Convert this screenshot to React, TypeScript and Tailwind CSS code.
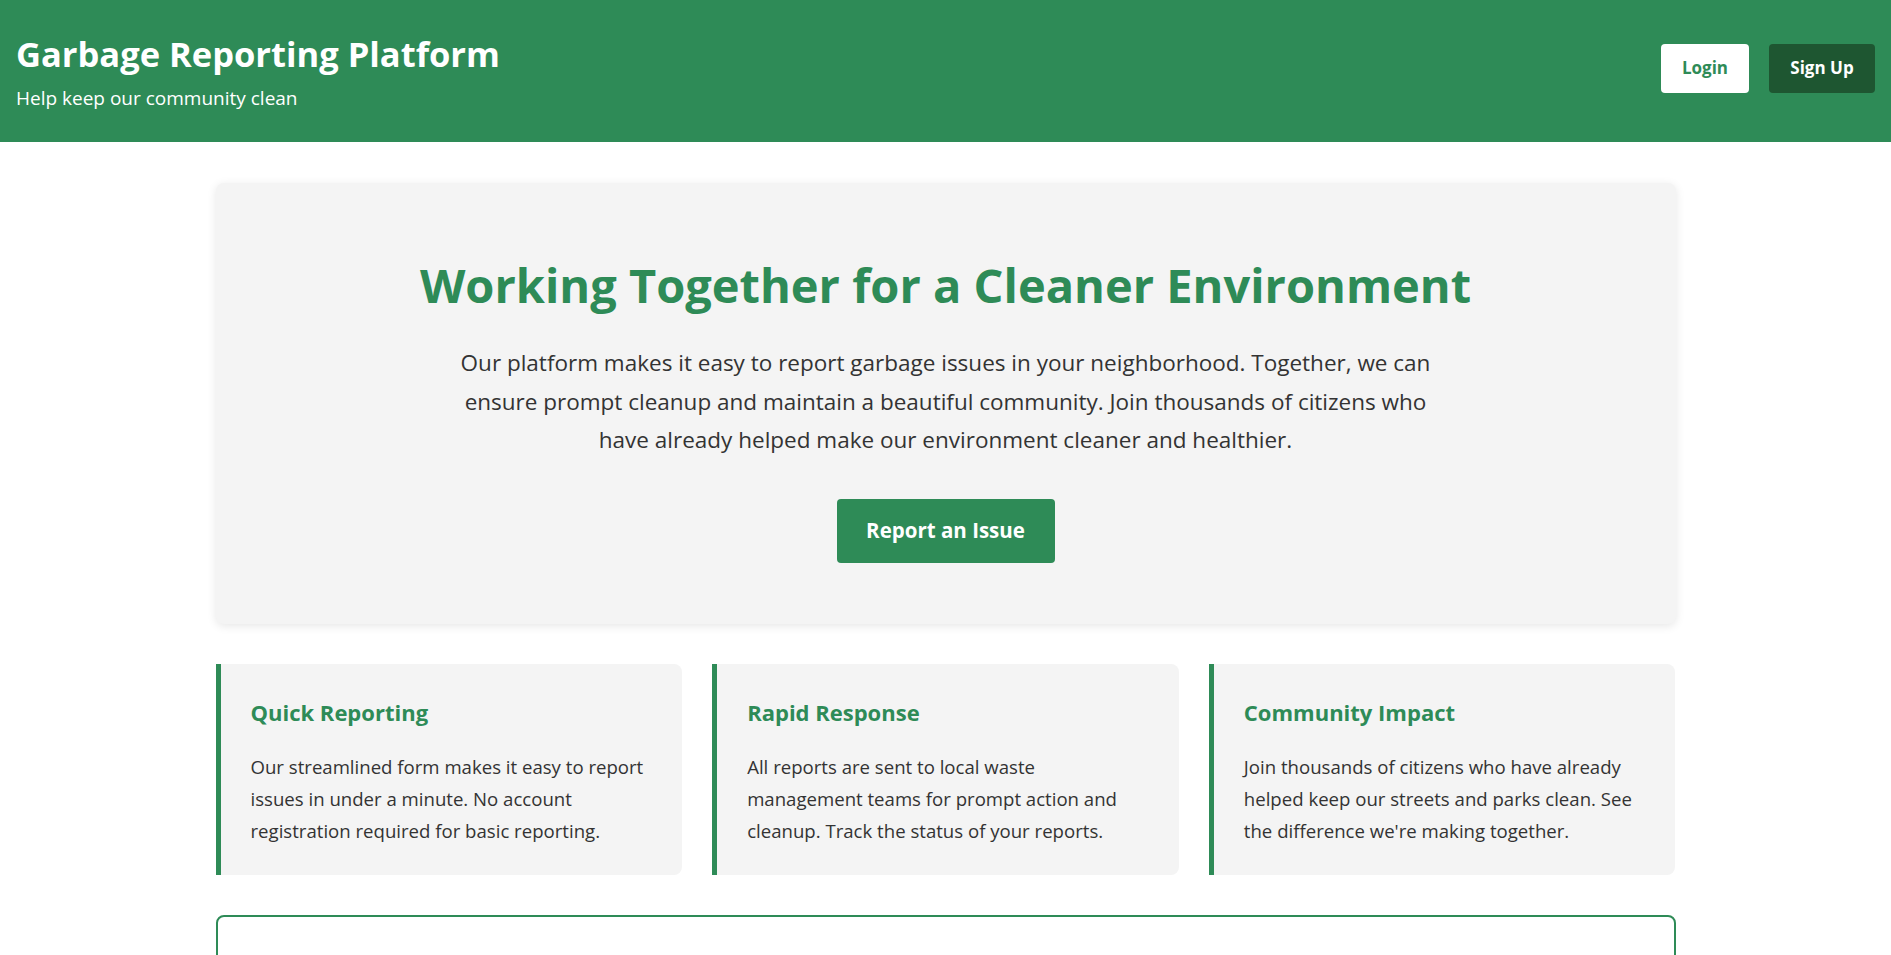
const features = [
  {
    title: "Quick Reporting",
    text: "Our streamlined form makes it easy to report issues in under a minute. No account registration required for basic reporting.",
  },
  {
    title: "Rapid Response",
    text: "All reports are sent to local waste management teams for prompt action and cleanup. Track the status of your reports.",
  },
  {
    title: "Community Impact",
    text: "Join thousands of citizens who have already helped keep our streets and parks clean. See the difference we're making together.",
  },
];

export default function App() {
  return (
    <div className="min-h-screen bg-white text-[#333] font-['Open_Sans',sans-serif]">
      {/* header */}
      <header className="flex h-[142px] items-center justify-between bg-[#2e8b57] px-4">
        <div className="pt-[2px]">
          <h1 className="text-[34.5px] font-bold leading-[43px] text-white">Garbage Reporting Platform</h1>
          <p className="mt-[10px] text-[19px] leading-[27px] text-white">Help keep our community clean</p>
        </div>
        <div className="-mt-[6px] flex gap-5">
          <button className="h-[49px] w-[88px] rounded bg-white text-[17px] font-bold text-[#2e8b57]">Login</button>
          <button className="h-[49px] w-[106px] rounded bg-[#1e5631] text-[17px] font-bold text-white">Sign Up</button>
        </div>
      </header>

      <main className="mx-auto max-w-[1460px] pt-[41px]">
        {/* hero */}
        <section className="rounded-lg bg-[#f4f4f4] pt-[73px] pb-[61px] text-center shadow-[0_2px_10px_rgba(0,0,0,0.1)]">
          <h2 className="text-[47px] font-bold leading-[58px] text-[#2e8b57]">
            Working Together for a Cleaner Environment
          </h2>
          <p className="mx-auto mt-[30px] max-w-[1000px] text-[22.5px] leading-[38.5px]">
            Our platform makes it easy to report garbage issues in your neighborhood. Together, we can ensure prompt
            cleanup and maintain a beautiful community. Join thousands of citizens who have already helped make our
            environment cleaner and healthier.
          </p>
          <button className="mt-[39px] h-[64px] w-[218px] rounded bg-[#2e8b57] text-[20.5px] font-bold text-white">
            Report an Issue
          </button>
        </section>

        {/* features */}
        <section className="mt-10 grid grid-cols-3 gap-[30px]">
          {features.map((f) => (
            <div
              key={f.title}
              className="rounded-r-lg border-l-[5px] border-[#2e8b57] bg-[#f4f4f4] px-[30px] pt-[34px] pb-[28px]"
            >
              <h3 className="text-[22px] font-bold leading-[29px] text-[#2e8b57]">{f.title}</h3>
              <p className="mt-[24px] text-[18.6px] leading-[32px]">{f.text}</p>
            </div>
          ))}
        </section>

        {/* report form box */}
        <section className="mt-10 h-[240px] rounded-lg border-2 border-[#2e8b57] bg-white" />
      </main>
    </div>
  );
}
